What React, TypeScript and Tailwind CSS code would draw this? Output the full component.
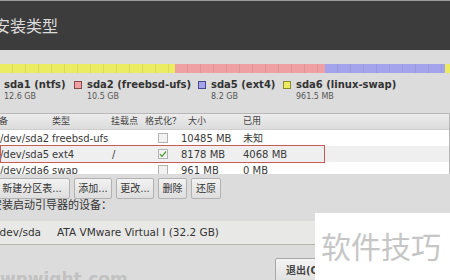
import React from "react";

type Part = { name: string; size: string; fill: string; edge: string; width: number };

const parts: Part[] = [
  { name: "sda1 (ntfs)", size: "12.6 GB", fill: "bg-[#ecec62]", edge: "border-[#8a8a30]", width: 83 },
  { name: "sda2 (freebsd-ufs)", size: "10.5 GB", fill: "bg-[#eea0a2]", edge: "border-[#8a4a4a]", width: 124 },
  { name: "sda5 (ext4)", size: "8.2 GB", fill: "bg-[#a4a4ec]", edge: "border-[#4a4a8a]", width: 85 },
  { name: "sda6 (linux-swap)", size: "961.5 MB", fill: "bg-[#ecec62]", edge: "border-[#8a8a30]", width: 160 },
];

type Row = { dev: string; type: string; mount: string; format: boolean; size: string; used: string; hi?: boolean };

const rows: Row[] = [
  { dev: "/dev/sda2", type: "freebsd-ufs", mount: "", format: false, size: "10485 MB", used: "未知" },
  { dev: "/dev/sda5", type: "ext4", mount: "/", format: true, size: "8178 MB", used: "4068 MB", hi: true },
  { dev: "/dev/sda6", type: "swap", mount: "", format: false, size: "961 MB", used: "0 MB" },
];

function Check({ on }: { on: boolean }) {
  return (
    <span className="flex h-[10px] w-[10px] items-center justify-center border border-[#b4b4b4] bg-[#f2f2f2]">
      {on && (
        <svg width="9" height="8" viewBox="0 0 9 8">
          <path d="M1 4.2 L3.4 6.6 L8 1.2" fill="none" stroke="#4fa33a" strokeWidth="1.5" />
        </svg>
      )}
    </span>
  );
}

function Btn({ label, w }: { label: string; w: string }) {
  return (
    <div className={`flex h-[21px] ${w} items-center justify-center rounded-[2px] border border-[#b2b2b2] bg-gradient-to-b from-[#f2f2f2] to-[#dedede] text-[10px] text-[#333]`}>
      {label}
    </div>
  );
}

export default function App() {
  return (
    <div className="relative h-[280px] w-[450px] overflow-hidden bg-[#dcdcdc] font-['DejaVu_Sans','Noto_Sans_CJK_SC',sans-serif] text-[#3a3a3a]">
      <div className="h-px bg-[#9c9c9c]" />
      <div className="flex h-[49px] items-center bg-[#3c3c3c] pt-[3px]">
        <span className="-ml-[6px] text-[16px] text-[#dcdcdc]">安装类型</span>
      </div>
      <div className="h-[14px]" />

      <div className="flex h-[9px]">
        <div className="w-[175px] bg-[#ecec62] bg-[repeating-linear-gradient(90deg,transparent_0,transparent_12px,rgba(0,0,0,0.07)_12px,rgba(0,0,0,0.07)_13px)]" />
        <div className="w-[150px] bg-[#eea0a2] bg-[repeating-linear-gradient(90deg,transparent_0,transparent_12px,rgba(0,0,0,0.07)_12px,rgba(0,0,0,0.07)_13px)]" />
        <div className="w-[120px] bg-[#a4a4ec] bg-[repeating-linear-gradient(90deg,transparent_0,transparent_12px,rgba(0,0,0,0.07)_12px,rgba(0,0,0,0.07)_13px)]" />
        <div className="flex-1 bg-[#ecec62]" />
      </div>

      <div className="-ml-[9px] flex h-[40px] pt-[6px]">
        {parts.map((p) => (
          <div key={p.name} className="flex shrink-0 gap-[5px]" style={{ width: p.width }}>
            <span className={`mt-[2px] h-[8px] w-[8px] shrink-0 border ${p.fill} ${p.edge}`} />
            <div className="flex flex-col">
              <span className="text-[10px] leading-[12px] font-bold text-[#333]">{p.name}</span>
              <span className="text-[8px] leading-[12px] text-[#555]">{p.size}</span>
            </div>
          </div>
        ))}
      </div>

      <div className="relative h-[61px] overflow-hidden border-t border-r border-[#b8b8b8] bg-white text-[10px]">
        <div className="-ml-[12px] flex h-[16px] items-center border-b border-[#cfcfcf] bg-gradient-to-b from-[#ececec] to-[#dcdcdc] text-[9px] text-[#444]">
          <span className="w-[64px] pl-[2px]">设备</span>
          <span className="w-[59px]">类型</span>
          <span className="w-[34px]">挂载点</span>
          <span className="w-[43px]">格式化？</span>
          <span className="w-[55px]">大小</span>
          <span className="flex-1">已用</span>
        </div>
        {rows.map((r) => (
          <div key={r.dev} className={`-ml-[12px] flex h-[16px] items-center ${r.hi ? "bg-[#efefef]" : "bg-white"}`}>
            <span className="w-[64px] pl-[12px]">{r.dev}</span>
            <span className="w-[59px]">{r.type}</span>
            <span className="w-[34px] pl-px">{r.mount}</span>
            <span className="flex w-[36px] justify-center">
              <Check on={r.format} />
            </span>
            <span className="w-[62px]">{r.size}</span>
            <span className="flex-1">{r.used}</span>
          </div>
        ))}
        <div className="absolute top-[31px] left-0 h-[18px] w-[325px] border border-[#c85a5a]" />
      </div>

      <div className="-ml-[6px] mt-[4px] flex gap-[4px]">
        <Btn label="新建分区表..." w="w-[76px]" />
        <Btn label="添加..." w="w-[38px]" />
        <Btn label="更改..." w="w-[38px]" />
        <Btn label="删除" w="w-[29px]" />
        <Btn label="还原" w="w-[30px]" />
      </div>
      <div className="-ml-[9px] mt-px h-[12px] text-[11px] leading-[12px] text-[#333]">安装启动引导器的设备：</div>

      <div className="mt-[9px] -ml-[4px] flex h-[24px] w-[330px] items-center border-b border-[#b4b4a8] bg-[#e8e8e6] text-[10.5px] text-[#333]">
        <span className="w-[61px]">/dev/sda</span>
        <span>ATA VMware Virtual I (32.2 GB)</span>
      </div>

      <div className="mt-[13px] ml-[275px] flex h-[24px] w-[56px] items-center rounded-[2px] border border-[#a8a8a8] bg-gradient-to-b from-[#f4f4f4] to-[#e0e0e0] pl-[10px] text-[10px] font-bold text-[#444]">
        退出(Q)
      </div>

      <div className="absolute top-[267px] left-0 text-[17px] font-bold text-[#c2c2c2]">wnwight.com</div>

      <div className="absolute top-[213px] left-[315px] flex h-[67px] w-[135px] items-center bg-white pl-[6px] pt-[2px]">
        <span className="text-[30px] leading-none text-[#c6c6c6]">软件技巧</span>
      </div>
    </div>
  );
}
